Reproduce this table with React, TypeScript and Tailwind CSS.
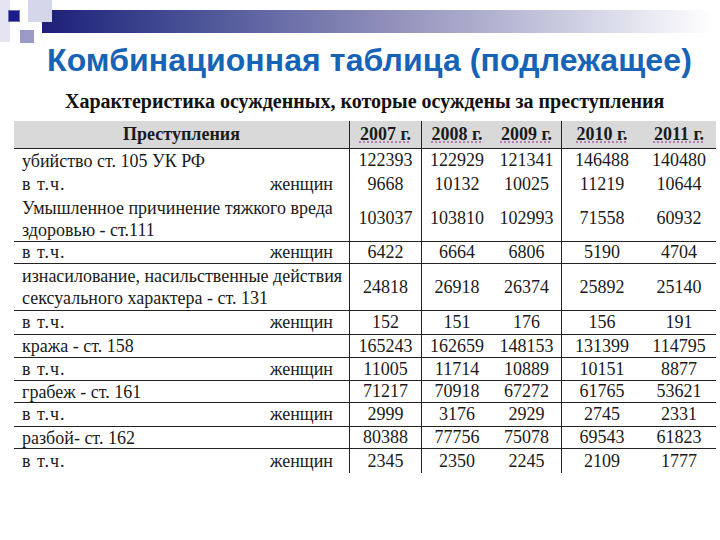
import React from 'react';

type Row = {
  lines: string[];
  sub?: boolean;
  values: string[];
  h: string;
  line: boolean;
};

const rows: Row[] = [
  { lines: ['убийство ст. 105 УК РФ'], values: ['122393', '122929', '121341', '146488', '140480'], h: 'h-[23px]', line: false },
  { lines: [], sub: true, values: ['9668', '10132', '10025', '11219', '10644'], h: 'h-[24px]', line: false },
  { lines: ['Умышленное причинение тяжкого вреда', 'здоровью - ст.111'], values: ['103037', '103810', '102993', '71558', '60932'], h: 'h-[46px]', line: true },
  { lines: [], sub: true, values: ['6422', '6664', '6806', '5190', '4704'], h: 'h-[22px]', line: true },
  { lines: ['изнасилование, насильственные действия', 'сексуального характера - ст. 131'], values: ['24818', '26918', '26374', '25892', '25140'], h: 'h-[47px]', line: true },
  { lines: [], sub: true, values: ['152', '151', '176', '156', '191'], h: 'h-[24px]', line: true },
  { lines: ['кража - ст. 158'], values: ['165243', '162659', '148153', '131399', '114795'], h: 'h-[23px]', line: true },
  { lines: [], sub: true, values: ['11005', '11714', '10889', '10151', '8877'], h: 'h-[23px]', line: true },
  { lines: ['грабеж - ст. 161'], values: ['71217', '70918', '67272', '61765', '53621'], h: 'h-[22px]', line: true },
  { lines: [], sub: true, values: ['2999', '3176', '2929', '2745', '2331'], h: 'h-[24px]', line: true },
  { lines: ['разбой- ст. 162'], values: ['80388', '77756', '75078', '69543', '61823'], h: 'h-[22px]', line: true },
  { lines: [], sub: true, values: ['2345', '2350', '2245', '2109', '1777'], h: 'h-[24px]', line: false },
];

const years = ['2007 г.', '2008 г.', '2009 г.', '2010 г.', '2011 г.'];
const colW = ['w-[72px]', 'w-[70px]', 'w-[70px]', 'w-[80px]', 'w-[74px]'];
const colR = ['border-r', '', 'border-r', '', ''];

export default function App() {
  return (
    <div className="relative w-[720px] h-[540px] bg-white overflow-hidden font-['Liberation_Serif',serif]">
      {/* декоративные квадраты */}
      <div className="absolute left-0 top-0 w-[10px] h-[42px] bg-[#e4e4f2]" />
      <div className="absolute left-[28px] top-0 w-[24px] h-[22px] bg-[#d6d6ea]" />
      <div className="absolute left-[20px] top-[30px] w-[14px] h-[13px] bg-[#9a9ac6]" />
      <div className="absolute left-[8px] top-[10px] w-[12px] h-[12px] bg-[#1c1c8c] border border-[#7070b0]" />

      <div className="ml-[42px] mt-[10px] h-[23px] w-[670px] bg-gradient-to-r from-[#1e1e78] via-[#8c8cb8] to-white" />

      <h1 className="mt-[9px] ml-[47px] text-[32px] font-bold leading-[36px] tracking-[0.1px] text-[#1763b5] font-['Liberation_Sans',Arial,sans-serif] whitespace-nowrap">
        Комбинационная таблица (подлежащее)
      </h1>

      <div className="mt-[11px] ml-[65px] text-[20px] font-bold leading-[24px] text-[#111] whitespace-nowrap">
        Характеристика осужденных, которые осуждены за преступления
      </div>

      <div className="ml-[14px] mt-[8px] w-[702px] text-[18px] text-[#1a1a1a]">
        <div className="flex h-[28px] bg-[#d9d9d9] border-b border-[#222] font-bold">
          <div className="w-[336px] border-r border-[#222] flex items-center justify-center">Преступления</div>
          {years.map((y, i) => (
            <div key={y} className={`${colW[i]} ${colR[i]} border-[#222] flex items-center justify-center`}>
              <span className="underline decoration-dotted decoration-[#b070b0] underline-offset-2">{y}</span>
            </div>
          ))}
        </div>

        {rows.map((r, idx) => (
          <div key={idx} className={`flex ${r.h} ${r.line ? 'border-b border-[#222]' : ''}`}>
            <div className="w-[336px] border-r border-[#222] pl-[8px] pr-[16px] flex items-center whitespace-nowrap">
              {r.sub ? (
                <div className="flex w-full justify-between">
                  <span className="tracking-[1px]">в т.ч.</span>
                  <span>женщин</span>
                </div>
              ) : (
                <div className="flex flex-col leading-[22px]">
                  {r.lines.map((l) => (
                    <span key={l}>{l}</span>
                  ))}
                </div>
              )}
            </div>
            {r.values.map((v, i) => (
              <div key={i} className={`${colW[i]} ${colR[i]} border-[#222] flex items-center justify-center`}>
                {v}
              </div>
            ))}
          </div>
        ))}
      </div>
    </div>
  );
}
